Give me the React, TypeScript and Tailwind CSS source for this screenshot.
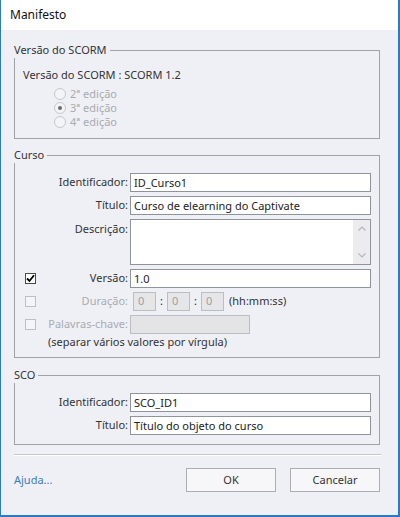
import React from 'react';

const FONT = "font-['Noto_Sans','Open_Sans',sans-serif]";

const Group: React.FC<{ title: string; className?: string; children: React.ReactNode }> = ({
  title,
  className,
  children,
}) => (
  <div className="w-[366px]">
    {/* legenda + linha superior */}
    <div className="flex h-[16px]">
      <span className="pr-[3px] leading-[16px]">{title}</span>
      <div className="mt-[8px] flex-1 border-r border-t border-[#a0a2aa]" />
    </div>
    <div className={`border-b border-l border-r border-[#a0a2aa] ${className ?? ''}`}>{children}</div>
  </div>
);

const TextBox: React.FC<{ value?: string; w?: string }> = ({ value, w = 'w-[241px]' }) => (
  <div
    className={`flex h-[19px] ${w} items-center border border-[#8f949c] bg-white pl-[3px] leading-[17px] text-[#222]`}
  >
    {value}
  </div>
);

const Radio: React.FC<{ label: string; checked?: boolean }> = ({ label, checked }) => (
  <div className="flex h-[14px] items-center">
    <span className="ml-[39px] flex h-[12px] w-[12px] items-center justify-center rounded-full border border-[#c6c7cc] bg-[#f3f4f7]">
      {checked && <span className="h-[4px] w-[4px] rounded-full bg-[#6b6b6b]" />}
    </span>
    <span className="ml-[4px] leading-[14px] text-[#a9abb0]">{label}</span>
  </div>
);

const CheckBox: React.FC<{ checked?: boolean; disabled?: boolean }> = ({ checked, disabled }) => (
  <span
    className={`ml-[10px] flex h-[11px] w-[11px] shrink-0 items-center justify-center border ${
      disabled ? 'border-[#bdbfc4] bg-[#f4f5f8]' : 'border-[#4a4a4a] bg-white'
    }`}
  >
    {checked && (
      <svg width="9" height="9" viewBox="0 0 9 9">
        <path d="M1 4.5 L3.5 7 L8 1.2" fill="none" stroke="#000" strokeWidth="1.8" />
      </svg>
    )}
  </span>
);

const TimeBox: React.FC = () => (
  <div className="flex h-[19px] w-[23px] items-center border border-[#bcbdc1] bg-[#e6e6e8] pl-[4px] text-[#a0a0a0]">
    0
  </div>
);

const Row: React.FC<{ label: string; children: React.ReactNode; disabled?: boolean }> = ({
  label,
  children,
  disabled,
}) => (
  <div className="flex items-center">
    <span className={`w-[113px] text-right ${disabled ? 'text-[#a9abb0]' : ''}`}>{label}</span>
    <div className="ml-[2px]">{children}</div>
  </div>
);

export default function App() {
  return (
    <div
      className={`${FONT} flex h-[517px] w-[400px] flex-col border-b-2 border-l border-r-2 border-[#2b79c9] text-[11px] text-[#333]`}
    >
      {/* barra de título */}
      <div className="flex h-[30px] items-center bg-white pl-[9px] text-[12px] text-[#111]">Manifesto</div>

      <div className="flex flex-1 flex-col bg-[#eff0f6] pl-[13px] pt-[12px]">
        {/* Versão do SCORM */}
        <Group title="Versão do SCORM" className="pb-[9px] pt-[9px]">
          <div className="ml-[8px] leading-[16px]">Versão do SCORM : SCORM 1.2</div>
          <div className="mt-[4px] flex flex-col">
            <Radio label="2ª edição" />
            <Radio label="3ª edição" checked />
            <Radio label="4ª edição" />
          </div>
        </Group>

        {/* Curso */}
        <div className="mt-[8px]">
          <Group title="Curso" className="pb-[7px] pt-[10px]">
            <div className="flex flex-col gap-[4px]">
              <Row label="Identificador:">
                <TextBox value="ID_Curso1" />
              </Row>
              <Row label="Título:">
                <TextBox value="Curso de elearning do Captivate" />
              </Row>
              <div className="flex items-start">
                <span className="w-[113px] pt-[2px] text-right">Descrição:</span>
                <div className="ml-[2px] flex h-[46px] w-[241px] border border-[#8f949c] bg-white">
                  <div className="flex-1" />
                  <div className="flex w-[17px] flex-col items-center justify-between bg-[#ececee] py-[6px]">
                    <svg width="8" height="5" viewBox="0 0 8 5">
                      <path d="M0.5 4.5 L4 1 L7.5 4.5" fill="none" stroke="#b4b6bb" strokeWidth="1.2" />
                    </svg>
                    <svg width="8" height="5" viewBox="0 0 8 5">
                      <path d="M0.5 0.5 L4 4 L7.5 0.5" fill="none" stroke="#b4b6bb" strokeWidth="1.2" />
                    </svg>
                  </div>
                </div>
              </div>
              <div className="flex items-center">
                <div className="flex w-[113px] items-center">
                  <CheckBox checked />
                  <span className="flex-1 text-right">Versão:</span>
                </div>
                <div className="ml-[2px]">
                  <TextBox value="1.0" />
                </div>
              </div>
              <div className="flex items-center">
                <div className="flex w-[113px] items-center">
                  <CheckBox disabled />
                  <span className="flex-1 text-right text-[#a9abb0]">Duração:</span>
                </div>
                <div className="ml-[5px] flex items-center">
                  <TimeBox />
                  <span className="w-[11px] text-center text-[#222]">:</span>
                  <TimeBox />
                  <span className="w-[11px] text-center text-[#222]">:</span>
                  <TimeBox />
                  <span className="ml-[5px]">(hh:mm:ss)</span>
                </div>
              </div>
              <div className="flex items-center">
                <div className="flex w-[113px] items-center">
                  <CheckBox disabled />
                  <span className="flex-1 text-right text-[#a9abb0]">Palavras-chave:</span>
                </div>
                <div className="ml-[2px] h-[19px] w-[120px] border border-[#bcbdc1] bg-[#e4e4e6]" />
              </div>
            </div>
            <div className="ml-[33px] leading-[16px]">(separar vários valores por vírgula)</div>
          </Group>
        </div>

        {/* SCO */}
        <div className="mt-[9px]">
          <Group title="SCO" className="pb-[9px] pt-[10px]">
            <div className="flex flex-col gap-[4px]">
              <Row label="Identificador:">
                <TextBox value="SCO_ID1" />
              </Row>
              <Row label="Título:">
                <TextBox value="Título do objeto do curso" />
              </Row>
            </div>
          </Group>
        </div>

        {/* separador */}
        <div className="mt-[9px] w-[367px] border-b border-t border-b-white border-t-[#c4c6cc]" />

        {/* rodapé */}
        <div className="mt-[12px] flex w-[366px] items-center">
          <span className="flex-1 text-[#3b7cb8]">Ajuda...</span>
          <button className="h-[24px] w-[90px] border border-[#adadb0] bg-[#f7f7f9] text-[#333]">OK</button>
          <button className="ml-[14px] h-[24px] w-[90px] border border-[#adadb0] bg-[#f7f7f9] text-[#333]">
            Cancelar
          </button>
        </div>
      </div>
    </div>
  );
}
